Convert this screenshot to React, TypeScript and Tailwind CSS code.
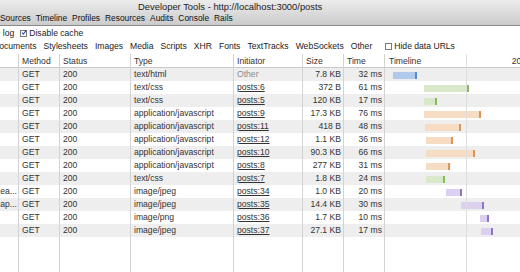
import React from "react";

type Kind = "doc" | "css" | "js" | "img";

interface Req {
  name: string;
  type: string;
  init: string;
  size: string;
  time: string;
  kind: Kind;
  left: number;
  width: number;
}

const requests: Req[] = [
  { name: "", type: "text/html", init: "Other", size: "7.8 KB", time: "32 ms", kind: "doc", left: 8, width: 24 },
  { name: "", type: "text/css", init: "posts:6", size: "372 B", time: "61 ms", kind: "css", left: 39, width: 45 },
  { name: "", type: "text/css", init: "posts:5", size: "120 KB", time: "17 ms", kind: "css", left: 39, width: 13 },
  { name: "", type: "application/javascript", init: "posts:9", size: "17.3 KB", time: "76 ms", kind: "js", left: 39, width: 57 },
  { name: "", type: "application/javascript", init: "posts:11", size: "418 B", time: "48 ms", kind: "js", left: 40, width: 36 },
  { name: "", type: "application/javascript", init: "posts:12", size: "1.1 KB", time: "36 ms", kind: "js", left: 41, width: 27 },
  { name: "", type: "application/javascript", init: "posts:10", size: "90.3 KB", time: "66 ms", kind: "js", left: 41, width: 49 },
  { name: "", type: "application/javascript", init: "posts:8", size: "277 KB", time: "31 ms", kind: "js", left: 41, width: 24 },
  { name: "", type: "text/css", init: "posts:7", size: "1.8 KB", time: "24 ms", kind: "css", left: 41, width: 19 },
  { name: "ea...", type: "image/jpeg", init: "posts:34", size: "1.0 KB", time: "20 ms", kind: "img", left: 61, width: 16 },
  { name: "ap...", type: "image/jpeg", init: "posts:35", size: "14.4 KB", time: "30 ms", kind: "img", left: 76, width: 23 },
  { name: "", type: "image/png", init: "posts:36", size: "1.7 KB", time: "10 ms", kind: "img", left: 95, width: 9 },
  { name: "", type: "image/jpeg", init: "posts:37", size: "27.1 KB", time: "17 ms", kind: "img", left: 96, width: 12 },
];

const barFill: Record<Kind, string> = {
  doc: "bg-[#b1c9ec] border-r-[#5a88d2]",
  css: "bg-[#d9e8c9] border-r-[#86b963]",
  js: "bg-[#f6dcc2] border-r-[#d9955a]",
  img: "bg-[#dcd0f1] border-r-[#8d74c9]",
};

const cols = "grid grid-cols-[19px_41px_71px_103px_69px_41px_41px_1fr]";
const cell = "border-r border-[#d3d3d3] h-full";

function Checkbox({ checked }: { checked?: boolean }) {
  return (
    <span className="inline-flex w-[7px] h-[7px] border border-[#7a7a7a] bg-white mr-[2px] items-center justify-center">
      {checked && (
        <svg width="9" height="9" viewBox="0 0 9 9" className="-mt-[2px] -mr-[1px]">
          <path d="M1.5 4.5 L3.5 7 L8 1" stroke="#2a4f9c" strokeWidth="1.6" fill="none" />
        </svg>
      )}
    </span>
  );
}

export default function App() {
  return (
    <div className="w-[520px] h-[272px] overflow-hidden bg-white text-[#333] font-['Liberation_Sans',Arial,sans-serif] text-[8.6px] flex flex-col">
      {/* window title + panel tabs */}
      <div className="h-[26px] bg-gradient-to-b from-[#ececec] to-[#cbcbcb] border-b border-[#8a8a8a] flex flex-col shrink-0">
        <div className="h-[12px] pl-[138px] text-[9.4px] text-[#222] leading-[13px]">
          Developer Tools - http://localhost:3000/posts
        </div>
        <div className="h-[13px] flex items-center gap-[5px] text-[#111] text-[8.4px] leading-none">
          <span>Sources</span>
          <span>Timeline</span>
          <span>Profiles</span>
          <span>Resources</span>
          <span>Audits</span>
          <span>Console</span>
          <span>Rails</span>
        </div>
      </div>

      {/* options */}
      <div className="h-[14px] flex items-center shrink-0 text-[#222]">
        <span className="-ml-[34px] mr-[6px]">Preserve log</span>
        <Checkbox checked />
        <span>Disable cache</span>
      </div>
      <div className="h-[13px] flex items-center gap-[7px] shrink-0 text-[#222]">
        <span className="-ml-[7px]">Documents</span>
        <span>Stylesheets</span>
        <span>Images</span>
        <span>Media</span>
        <span>Scripts</span>
        <span>XHR</span>
        <span>Fonts</span>
        <span>TextTracks</span>
        <span>WebSockets</span>
        <span>Other</span>
        <span className="ml-[6px] flex items-center">
          <Checkbox />
          Hide data URLs
        </span>
      </div>

      {/* table */}
      <div className="flex-1 flex flex-col mt-[1px] relative">
        <div className={`${cols} h-[14px] border-b border-[#c9c9c9] leading-[14px] shrink-0`}>
          <div className={cell}></div>
          <div className={`${cell} pl-[3px]`}>Method</div>
          <div className={`${cell} pl-[3px]`}>Status</div>
          <div className={`${cell} pl-[3px]`}>Type</div>
          <div className={`${cell} pl-[3px]`}>Initiator</div>
          <div className={`${cell} pl-[3px]`}>Size</div>
          <div className={`${cell} pl-[3px]`}>Time</div>
          <div className="pl-[4px] flex justify-between whitespace-nowrap">
            <span>Timeline</span>
            <span className="-mr-[20px]">200 ms</span>
          </div>
        </div>

        {requests.map((r, i) => (
          <div
            key={i}
            className={`${cols} h-[13px] leading-[13px] shrink-0 ${i % 2 === 0 ? "bg-[#eeeeee]" : "bg-white"}`}
          >
            <div className={`${cell} text-right pr-[1px] overflow-hidden whitespace-nowrap`}>{r.name}</div>
            <div className={`${cell} pl-[3px]`}>GET</div>
            <div className={`${cell} pl-[3px]`}>200</div>
            <div className={`${cell} pl-[3px]`}>{r.type}</div>
            <div className={`${cell} pl-[3px]`}>
              {r.init === "Other" ? (
                <span className="text-[#8a8a8a]">Other</span>
              ) : (
                <span className="underline underline-offset-1">{r.init}</span>
              )}
            </div>
            <div className={`${cell} text-right pr-[2px]`}>{r.size}</div>
            <div className={`${cell} text-right pr-[2px]`}>{r.time}</div>
            <div className="relative h-full">
              <div
                className={`absolute top-[4px] h-[7px] border-r-2 ${barFill[r.kind]}`}
                style={{ left: r.left, width: r.width }}
              />
            </div>
          </div>
        ))}

        <div className={`${cols} flex-1`}>
          <div className={cell}></div>
          <div className={cell}></div>
          <div className={cell}></div>
          <div className={cell}></div>
          <div className={cell}></div>
          <div className={cell}></div>
          <div className={cell}></div>
          <div></div>
        </div>

        {/* timeline grid divider */}
        <div className="absolute top-0 bottom-0 left-[466px] w-px bg-[#dedede]" />
      </div>
    </div>
  );
}
